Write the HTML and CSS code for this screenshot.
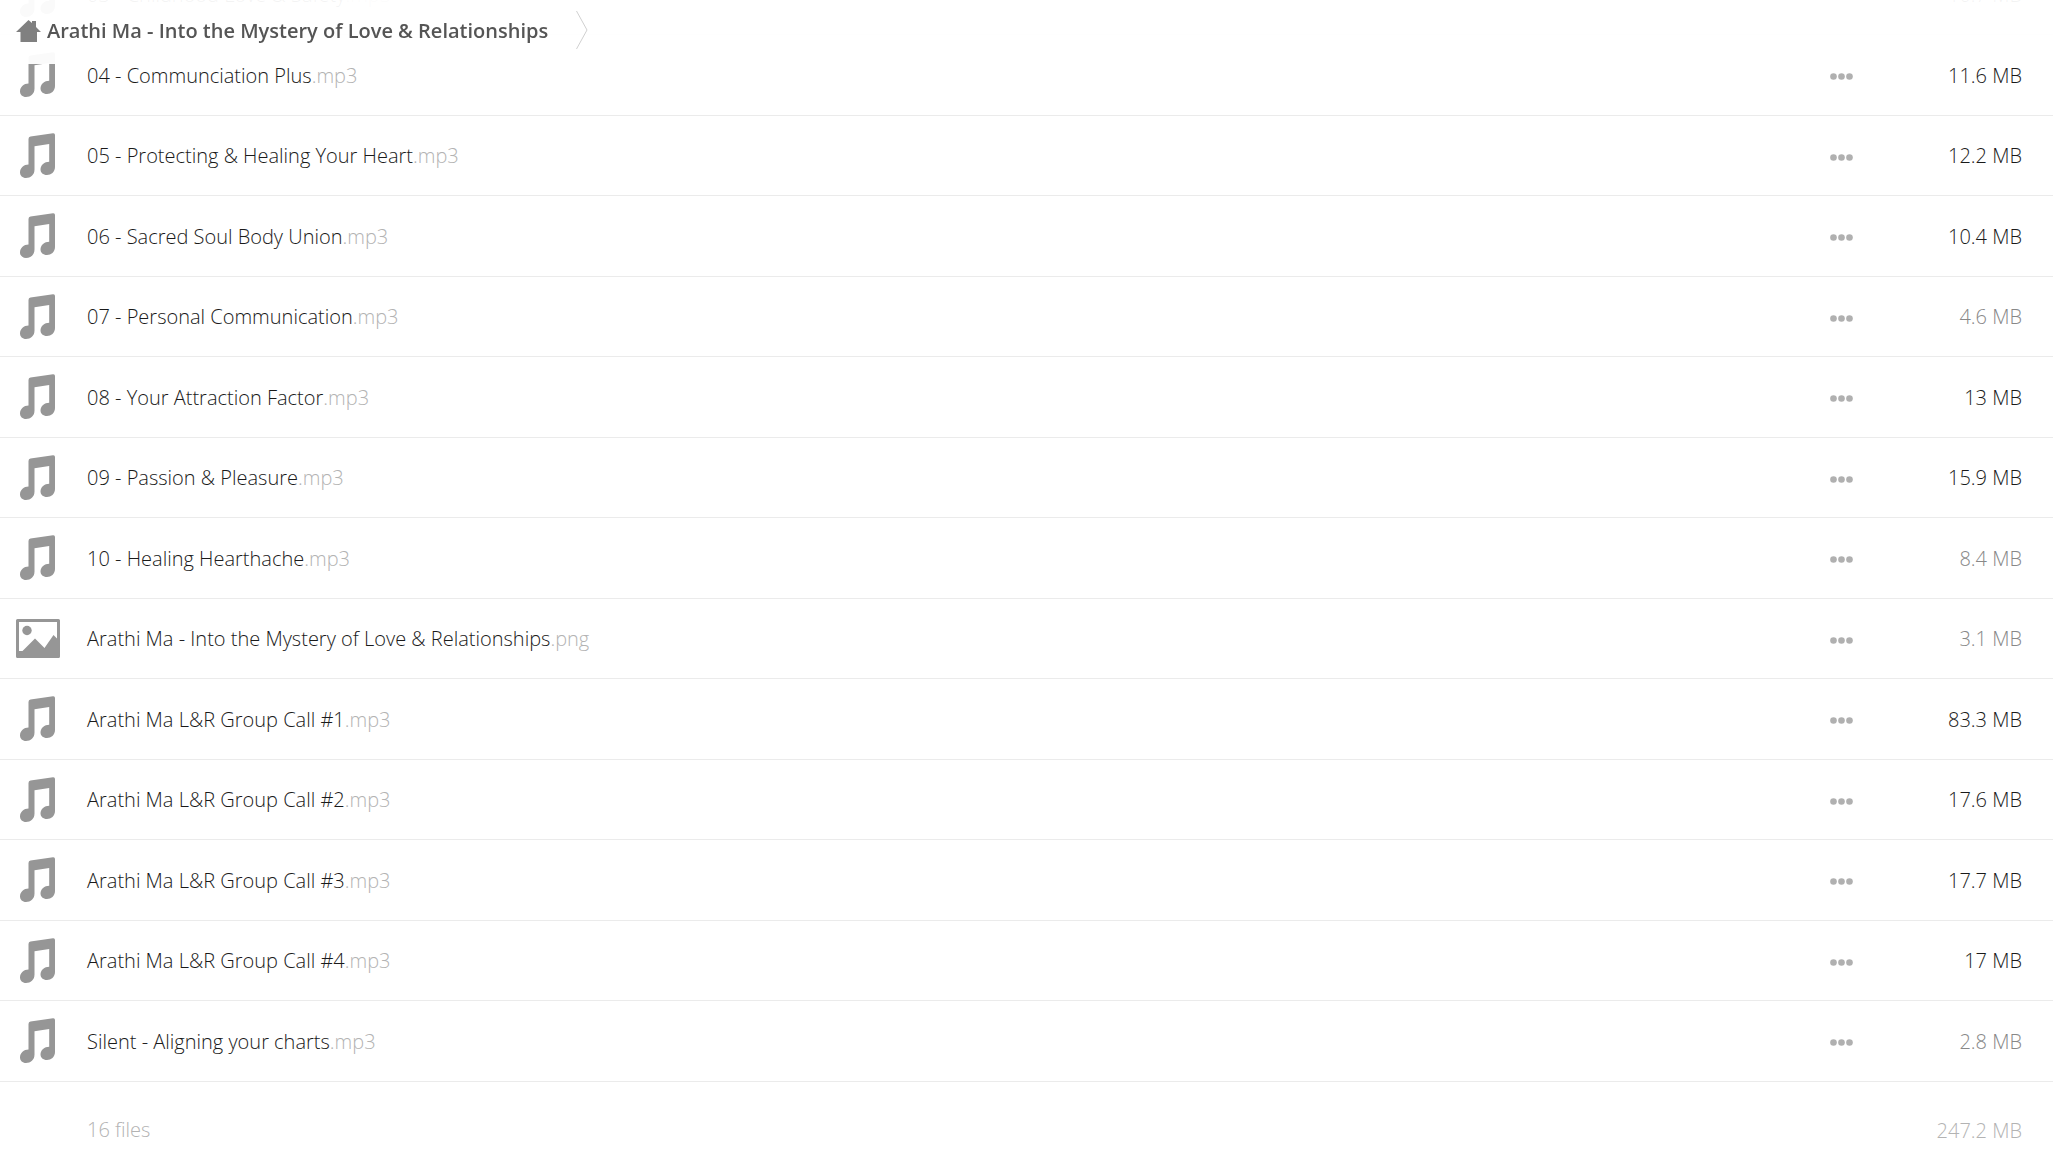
FILE: index.html
```html
<!DOCTYPE html>
<html lang="en">
<head>
    <meta charset="UTF-8">
    <meta name="viewport" content="width=device-width, initial-scale=1.0">
    <title>Arathi Ma - Into the Mystery of Love &amp; Relationships</title>
    <link rel="stylesheet" href="styles.css">
</head>
<body>
    <svg class="icon-defs" aria-hidden="true">
        <symbol id="icon-music" viewBox="0 0 36 46">
            <path d="M8.500 6Q8.500 4 10.500 3.600L33 0.300Q35 0.100 35 2V34C35 39 31 42 27 42C23 42 20.500 39.500 20.500 36.500C20.500 32 24.500 28.700 29.200 28.700V11L14.500 13.200V36.500C14.500 42 10.500 45 6 45C2.500 45 0 42.500 0 39.500C0 35 4 31.500 8.500 31.500Z"/>
        </symbol>
        <symbol id="icon-image" viewBox="0 0 44 39">
            <path fill-rule="evenodd" d="M1.500 0H42.500Q44 0 44 1.500V37.500Q44 39 42.500 39H1.500Q0 39 0 37.500V1.500Q0 0 1.500 0ZM3 3V32H6.500L19 19.500L28.500 29L37.500 16L41 19.500V3Z"/>
            <circle cx="11" cy="11.500" r="4.700"/>
        </symbol>
        <symbol id="icon-home" viewBox="0 0 25 22">
            <path d="M12.500 0L16 3V1H20V7L25 12H21V22H4.500V12H0Z"/>
        </symbol>
        <symbol id="icon-dots" viewBox="0 0 23 7">
            <circle cx="3.500" cy="3.500" r="3.300"/>
            <circle cx="11.500" cy="3.500" r="3.300"/>
            <circle cx="19.500" cy="3.500" r="3.300"/>
        </symbol>
    </svg>

    <nav id="breadcrumb">
        <a href="#" class="crumb">
            <svg class="home-icon"><use href="#icon-home"/></svg>
            <span>Arathi Ma - Into the Mystery of Love &amp; Relationships</span>
        </a>
        <svg class="separator" viewBox="0 0 12 38"><path d="M0.500 0L11 19L0.500 38"/></svg>
    </nav>

    <table id="file-list">
        <tbody>
            <tr>
                <td class="file-icon"><svg class="music"><use href="#icon-music"/></svg></td>
                <td class="file-name"><a href="#">03 - Childhood Love &amp; Safety<span class="ext">.mp3</span></a></td>
                <td class="file-menu"><button aria-label="More"><svg><use href="#icon-dots"/></svg></button></td>
                <td class="file-size">10.7 MB</td>
            </tr>
            <tr>
                <td class="file-icon"><svg class="music"><use href="#icon-music"/></svg></td>
                <td class="file-name"><a href="#">04 - Communciation Plus<span class="ext">.mp3</span></a></td>
                <td class="file-menu"><button aria-label="More"><svg><use href="#icon-dots"/></svg></button></td>
                <td class="file-size">11.6 MB</td>
            </tr>
            <tr>
                <td class="file-icon"><svg class="music"><use href="#icon-music"/></svg></td>
                <td class="file-name"><a href="#">05 - Protecting &amp; Healing Your Heart<span class="ext">.mp3</span></a></td>
                <td class="file-menu"><button aria-label="More"><svg><use href="#icon-dots"/></svg></button></td>
                <td class="file-size">12.2 MB</td>
            </tr>
            <tr>
                <td class="file-icon"><svg class="music"><use href="#icon-music"/></svg></td>
                <td class="file-name"><a href="#">06 - Sacred Soul Body Union<span class="ext">.mp3</span></a></td>
                <td class="file-menu"><button aria-label="More"><svg><use href="#icon-dots"/></svg></button></td>
                <td class="file-size">10.4 MB</td>
            </tr>
            <tr>
                <td class="file-icon"><svg class="music"><use href="#icon-music"/></svg></td>
                <td class="file-name"><a href="#">07 - Personal Communication<span class="ext">.mp3</span></a></td>
                <td class="file-menu"><button aria-label="More"><svg><use href="#icon-dots"/></svg></button></td>
                <td class="file-size small">4.6 MB</td>
            </tr>
            <tr>
                <td class="file-icon"><svg class="music"><use href="#icon-music"/></svg></td>
                <td class="file-name"><a href="#">08 - Your Attraction Factor<span class="ext">.mp3</span></a></td>
                <td class="file-menu"><button aria-label="More"><svg><use href="#icon-dots"/></svg></button></td>
                <td class="file-size">13 MB</td>
            </tr>
            <tr>
                <td class="file-icon"><svg class="music"><use href="#icon-music"/></svg></td>
                <td class="file-name"><a href="#">09 - Passion &amp; Pleasure<span class="ext">.mp3</span></a></td>
                <td class="file-menu"><button aria-label="More"><svg><use href="#icon-dots"/></svg></button></td>
                <td class="file-size">15.9 MB</td>
            </tr>
            <tr>
                <td class="file-icon"><svg class="music"><use href="#icon-music"/></svg></td>
                <td class="file-name"><a href="#">10 - Healing Hearthache<span class="ext">.mp3</span></a></td>
                <td class="file-menu"><button aria-label="More"><svg><use href="#icon-dots"/></svg></button></td>
                <td class="file-size small">8.4 MB</td>
            </tr>
            <tr>
                <td class="file-icon"><svg class="image"><use href="#icon-image"/></svg></td>
                <td class="file-name"><a href="#">Arathi Ma - Into the Mystery of Love &amp; Relationships<span class="ext">.png</span></a></td>
                <td class="file-menu"><button aria-label="More"><svg><use href="#icon-dots"/></svg></button></td>
                <td class="file-size small">3.1 MB</td>
            </tr>
            <tr>
                <td class="file-icon"><svg class="music"><use href="#icon-music"/></svg></td>
                <td class="file-name"><a href="#">Arathi Ma L&amp;R Group Call #1<span class="ext">.mp3</span></a></td>
                <td class="file-menu"><button aria-label="More"><svg><use href="#icon-dots"/></svg></button></td>
                <td class="file-size">83.3 MB</td>
            </tr>
            <tr>
                <td class="file-icon"><svg class="music"><use href="#icon-music"/></svg></td>
                <td class="file-name"><a href="#">Arathi Ma L&amp;R Group Call #2<span class="ext">.mp3</span></a></td>
                <td class="file-menu"><button aria-label="More"><svg><use href="#icon-dots"/></svg></button></td>
                <td class="file-size">17.6 MB</td>
            </tr>
            <tr>
                <td class="file-icon"><svg class="music"><use href="#icon-music"/></svg></td>
                <td class="file-name"><a href="#">Arathi Ma L&amp;R Group Call #3<span class="ext">.mp3</span></a></td>
                <td class="file-menu"><button aria-label="More"><svg><use href="#icon-dots"/></svg></button></td>
                <td class="file-size">17.7 MB</td>
            </tr>
            <tr>
                <td class="file-icon"><svg class="music"><use href="#icon-music"/></svg></td>
                <td class="file-name"><a href="#">Arathi Ma L&amp;R Group Call #4<span class="ext">.mp3</span></a></td>
                <td class="file-menu"><button aria-label="More"><svg><use href="#icon-dots"/></svg></button></td>
                <td class="file-size">17 MB</td>
            </tr>
            <tr>
                <td class="file-icon"><svg class="music"><use href="#icon-music"/></svg></td>
                <td class="file-name"><a href="#">Silent - Aligning your charts<span class="ext">.mp3</span></a></td>
                <td class="file-menu"><button aria-label="More"><svg><use href="#icon-dots"/></svg></button></td>
                <td class="file-size small">2.8 MB</td>
            </tr>
        </tbody>
        <tfoot>
            <tr>
                <td></td>
                <td>16 files</td>
                <td></td>
                <td class="file-size">247.2 MB</td>
            </tr>
        </tfoot>
    </table>
</body>
</html>
```

FILE: styles.css
```css
body {
    margin: 0;
    background-color: white;
    font-family: "Open Sans", sans-serif;
    font-size: 20px;
    font-weight: 300;
    line-height: 26px;
    color: #1a1a1a;
}

a {
    color: inherit;
    text-decoration: none;
}

.icon-defs {
    position: absolute;
    width: 0;
    height: 0;
}

#breadcrumb {
    position: fixed;
    top: 0;
    left: 0;
    right: 0;
    z-index: 1;
    box-sizing: border-box;
    height: 64px;
    padding: 0 16px 4px;
    display: flex;
    align-items: center;
    gap: 28px;
    background-color: rgba(255, 255, 255, 0.95);
}

.crumb {
    display: flex;
    align-items: center;
    gap: 6px;
    padding-top: 2px;
    font-weight: 600;
    color: #555;
}

.home-icon {
    width: 25px;
    height: 22px;
    fill: #808080;
}

.separator {
    width: 12px;
    height: 38px;
    fill: none;
    stroke: #d0d0d0;
}

/* list is scrolled a little under the breadcrumb */
#file-list {
    width: 100%;
    margin-top: -45px;
    border-collapse: separate;
    border-spacing: 0;
    table-layout: fixed;
}

#file-list td {
    box-sizing: border-box;
    height: 80px;
    padding: 0;
    vertical-align: middle;
}

#file-list tbody td {
    border-bottom: 1px solid #ebebeb;
}

#file-list tbody tr:nth-child(even) td {
    height: 81px;
}

#file-list .file-icon {
    width: 87px;
    padding-left: 16px;
}

.file-icon svg {
    display: block;
    fill: #969696;
}

.music {
    width: 36px;
    height: 46px;
    margin-left: 4px;
}

.image {
    width: 44px;
    height: 39px;
}

#file-list .file-name {
    padding-top: 1px;
}

.ext {
    color: #b3b3b3;
}

#file-list .file-menu {
    width: 60px;
    padding-top: 3px;
}

.file-menu button {
    display: block;
    padding: 10px;
    margin: 0 auto;
    border: 0;
    background: none;
    cursor: pointer;
}

.file-menu svg {
    display: block;
    width: 23px;
    height: 7px;
    fill: #b0b0b0;
}

#file-list .file-size {
    width: 182px;
    padding-top: 1px;
    padding-right: 31px;
    text-align: right;
}

#file-list .small {
    color: #888;
}

#file-list tfoot td {
    height: 96px;
    color: #b3b3b3;
}
```
